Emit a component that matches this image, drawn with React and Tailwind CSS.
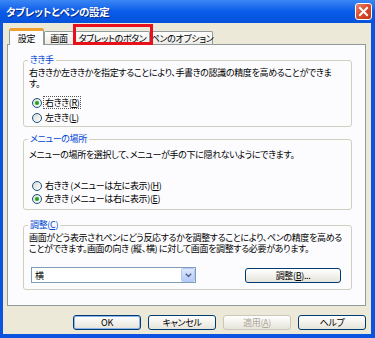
import React from "react";

const F = "font-['Noto_Sans_CJK_JP','Noto_Sans',sans-serif] [font-feature-settings:'palt']";

function Radio({ checked }) {
  return (
    <span className="w-[10px] h-[10px] rounded-full border border-[#1C5180] bg-gradient-to-br from-[#D8D8D2] to-white flex items-center justify-center shrink-0">
      {checked && <span className="w-[4px] h-[4px] rounded-full bg-[#1FA31F]" />}
    </span>
  );
}

function RadioRow({ checked, children, h, focus }) {
  return (
    <div className={`flex items-center pl-[8px] gap-[2px] ${h}`}>
      <Radio checked={checked} />
      <span className={`whitespace-nowrap leading-[11px] px-[1px] ${focus ? "outline outline-1 outline-dotted outline-[#555]" : ""}`}>
        {children}
      </span>
    </div>
  );
}

function Btn({ children, w, def, disabled }) {
  return (
    <div
      className={`${w} h-[15px] rounded-[3px] border ${
        disabled ? "border-[#C9C7BA] text-[#ACA899]" : "border-[#003C74] text-black"
      } bg-gradient-to-b from-white to-[#E6E4DA] flex items-center justify-center ${
        def ? "shadow-[inset_0_0_0_1px_#8FB4EA]" : ""
      }`}
    >
      <span className="whitespace-nowrap leading-[11px]">{children}</span>
    </div>
  );
}

function Tab({ children, w, selected }) {
  if (selected) {
    return (
      <div
        className={`${w} h-[17px] -mb-[1px] relative z-10 bg-[#FCFCFE] border-x border-[#919B9C] border-t-[3px] border-t-[#F0A030] rounded-t-[2px] flex items-center justify-center`}
      >
        <span className="whitespace-nowrap leading-[11px]">{children}</span>
      </div>
    );
  }
  return (
    <div
      className={`${w} h-[13px] bg-gradient-to-b from-white to-[#ECEBE6] border-x border-t border-[#919B9C] rounded-t-[2px] flex items-center justify-center`}
    >
      <span className="whitespace-nowrap leading-[11px]">{children}</span>
    </div>
  );
}

export default function App() {
  return (
    <div className={`relative w-[375px] h-[338px] bg-[#0A54E0] flex flex-col text-[9px] tracking-[-0.35px] text-black ${F}`}>
      {/* Title bar */}
      <div className="h-[23px] shrink-0 bg-gradient-to-b from-[#3A86F4] via-[#0A5BEA] to-[#0652DB] flex items-center justify-between pl-[6px] pr-[3px]">
        <span className="text-white font-bold text-[10.5px] tracking-[-0.3px] leading-[13px] whitespace-nowrap [text-shadow:1px_1px_0_#0A2A8A]">
          タブレットとペンの設定
        </span>
        <div className="w-[17px] h-[17px] rounded-[3px] border border-white bg-gradient-to-br from-[#E8826A] via-[#D9482A] to-[#C2391C] flex items-center justify-center">
          <svg width="11" height="11" viewBox="0 0 11 11">
            <path d="M2 2 L9 9 M9 2 L2 9" stroke="white" strokeWidth="2" strokeLinecap="square" />
          </svg>
        </div>
      </div>

      {/* Body */}
      <div className="flex-1 ml-[3px] mr-[4px] mb-[4px] bg-[#ECE9D8] flex flex-col pt-[5px] pl-[4px] pr-[5px]">
        {/* Tabs */}
        <div className="h-[16px] flex items-end pl-[2px] relative">
          <Tab w="w-[35px]" selected>設定</Tab>
          <Tab w="w-[30px]">画面</Tab>
          <div className="w-[1px]" />
          <Tab w="w-[75px]">タブレットのボタン</Tab>
          <div className="w-[1px]" />
          <Tab w="w-[62px]">ペンのオプション</Tab>
        </div>

        {/* Panel */}
        <div className="h-[262px] border border-[#919B9C] bg-[#FCFCFE] pl-[15px] pr-[13px] flex flex-col">
          {/* Group 1 */}
          <fieldset className="mt-[9px] border border-[#D0D0BF] rounded-[3px] pb-[1px]">
            <legend className="ml-[4px] px-[2px] leading-[12px] text-[#0046D5]">きき手</legend>
            <div className="pl-[5px] mt-[1px] leading-[11px] whitespace-nowrap">
              <div>右ききか左ききかを指定することにより、手書きの認識の精度を高めることができま</div>
              <div>す。</div>
            </div>
            <div className="mt-[6px]">
              <RadioRow checked h="h-[15px]" focus>
                右きき(<span className="underline">R</span>)
              </RadioRow>
              <RadioRow h="h-[15px]">
                左きき(<span className="underline">L</span>)
              </RadioRow>
            </div>
          </fieldset>

          {/* Group 2 */}
          <fieldset className="mt-[6px] border border-[#D0D0BF] rounded-[3px] pb-[4px]">
            <legend className="ml-[4px] px-[2px] leading-[12px] text-[#0046D5]">メニューの場所</legend>
            <div className="pl-[5px] mt-[4px] leading-[11px] whitespace-nowrap">
              メニューの場所を選択して、メニューが手の下に隠れないようにできます。
            </div>
            <div className="mt-[19px]">
              <RadioRow h="h-[13px]">
                右きき (メニューは左に表示)(<span className="underline">H</span>)
              </RadioRow>
              <RadioRow checked h="h-[13px]">
                左きき (メニューは右に表示)(<span className="underline">E</span>)
              </RadioRow>
            </div>
          </fieldset>

          {/* Group 3 */}
          <fieldset className="mt-[9px] border border-[#D0D0BF] rounded-[3px] pb-[6px]">
            <legend className="ml-[4px] px-[2px] leading-[12px] text-[#0046D5]">
              調整(<span className="underline">C</span>)
            </legend>
            <div className="pl-[5px] mt-[1px] leading-[11px] whitespace-nowrap">
              <div>画面がどう表示されペンにどう反応するかを調整することにより、ペンの精度を高める</div>
              <div>ことができます。画面の向き (縦、横) に対して画面を調整する必要があります。</div>
            </div>
            <div className="mt-[13px] flex items-center justify-between pl-[7px] pr-[10px]">
              <div className="w-[165px] h-[16px] border border-[#7F9DB9] bg-white flex items-center">
                <span className="flex-1 pl-[3px] leading-[11px]">横</span>
                <div className="w-[14px] h-[14px] rounded-[2px] border border-[#B4C8F6] bg-gradient-to-b from-[#DCE6FD] to-[#B6CBF9] flex items-center justify-center">
                  <svg width="7" height="5" viewBox="0 0 7 5">
                    <path d="M0.8 0.8 L3.5 3.5 L6.2 0.8" stroke="#4D6185" strokeWidth="1.4" fill="none" />
                  </svg>
                </div>
              </div>
              <Btn w="w-[96px]">
                調整(<span className="underline">B</span>)...
              </Btn>
            </div>
          </fieldset>
        </div>

        {/* Buttons */}
        <div className="mt-[9px] flex justify-end gap-[7px]">
          <Btn w="w-[68px]" def>OK</Btn>
          <Btn w="w-[68px]">キャンセル</Btn>
          <Btn w="w-[68px]" disabled>
            適用(<span className="underline">A</span>)
          </Btn>
          <Btn w="w-[68px]">ヘルプ</Btn>
        </div>
      </div>

      {/* Red annotation box */}
      <div className="absolute left-[73px] top-[24px] w-[80px] h-[21px] border-[3px] border-[#E8101A] pointer-events-none" />
    </div>
  );
}
